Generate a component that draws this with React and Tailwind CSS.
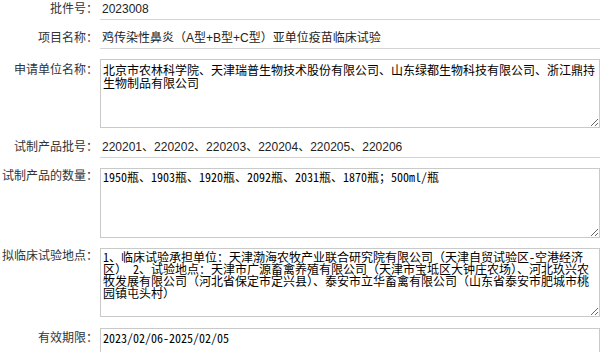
import React from "react";

const sans = { fontFamily: '"Liberation Sans", "Noto Sans CJK SC", sans-serif' };
const song = { fontFamily: '"Noto Sans Mono CJK SC", "Liberation Mono", "Noto Sans CJK SC", monospace' };

function Label({ children, className = "" }) {
  return (
    <div
      className={`w-[98px] shrink-0 text-right text-[12px] leading-[16px] text-[#333] ${className}`}
      style={sans}
    >
      {children}
    </div>
  );
}

function LineField({ label, value, className = "" }) {
  return (
    <div className={`flex ${className}`}>
      <Label className="leading-[19px]">{label}</Label>
      <div
        className="ml-[2px] w-[500px] h-[20px] border-b border-[#d4d4d4] pl-[2px] text-[12px] leading-[19px] text-[#222]"
        style={sans}
      >
        {value}
      </div>
    </div>
  );
}

function AreaField({ label, value, height, font, leading, pad, labelPad, className = "" }) {
  return (
    <div className={`flex ${className}`}>
      <Label className={labelPad}>{label}</Label>
      <textarea
        readOnly
        wrap="off"
        value={value}
        className={`ml-[2px] w-[500px] ${height} ${leading} ${pad} shrink-0 border border-[#c9c9c9] bg-white px-[2px] text-[12px] text-black overflow-hidden outline-none`}
        style={font}
      />
    </div>
  );
}

export default function App() {
  return (
    <div className="w-[616px] h-[352px] overflow-hidden bg-white">
      <LineField label="批件号：" value="2023008" />
      <LineField
        label="项目名称："
        value="鸡传染性鼻炎（A型+B型+C型）亚单位疫苗临床试验"
        className="mt-[9px]"
      />
      <AreaField
        label="申请单位名称："
        value={"北京市农林科学院、天津瑞普生物技术股份有限公司、山东绿都生物科技有限公司、浙江鼎持\n生物制品有限公司"}
        height="h-[69px]"
        leading="leading-[13px]"
        pad="pt-[3px]"
        font={{ fontFamily: '"Noto Sans CJK SC", sans-serif' }}
        labelPad="pt-[3px]"
        className="mt-[10px]"
      />
      <LineField
        label="试制产品批号："
        value="220201、220202、220203、220204、220205、220206"
        className="mt-[10px]"
      />
      <AreaField
        label="试制产品的数量："
        value="1950瓶、1903瓶、1920瓶、2092瓶、2031瓶、1870瓶；500ml/瓶"
        height="h-[70px]"
        leading="leading-[12px]"
        pad="pt-[2px]"
        font={song}
        labelPad="pt-0"
        className="mt-[10px]"
      />
      <AreaField
        label="拟临床试验地点："
        value={
          "1、临床试验承担单位：天津渤海农牧产业联合研究院有限公司（天津自贸试验区-空港经济\n区） 2、试验地点：天津市广源畜禽养殖有限公司（天津市宝坻区大钟庄农场）、河北玖兴农\n牧发展有限公司（河北省保定市定兴县）、泰安市立华畜禽有限公司（山东省泰安市肥城市桃\n园镇屯头村）"
        }
        height="h-[69px]"
        leading="leading-[12px]"
        pad="pt-[2px]"
        font={song}
        labelPad="pt-0"
        className="mt-[10px]"
      />
      <AreaField
        label="有效期限："
        value="2023/02/06-2025/02/05"
        height="h-[70px]"
        leading="leading-[12px]"
        pad="pt-[3px]"
        font={song}
        labelPad="pt-[2px]"
        className="mt-[11px]"
      />
    </div>
  );
}
